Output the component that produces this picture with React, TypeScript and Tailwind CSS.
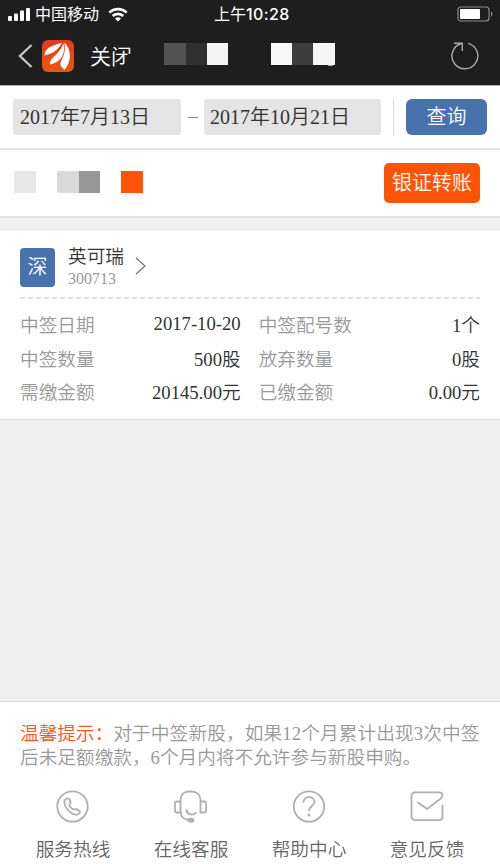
import type { ReactNode } from 'react'

const STATS = [
  ['中签日期', '2017-10-20', '中签配号数', '1个'],
  ['中签数量', '500股', '放弃数量', '0股'],
  ['需缴金额', '20145.00元', '已缴金额', '0.00元'],
]

function Icon({ children }: { children: ReactNode }) {
  return (
    <svg className="h-[34px] w-[34px]" viewBox="0 0 34 34" fill="none" stroke="#b0b0b0" strokeWidth="1.8" strokeLinecap="round" strokeLinejoin="round">
      {children}
    </svg>
  )
}

const LINKS = [
  {
    label: '服务热线',
    icon: (
      <Icon>
        <circle cx="16.500" cy="16.500" r="15.200" />
        <path d="M8.500 11c.3-2.600 4-3.600 5.300-1.200 1.300 2.400 1.200 3.500-.3 4.900-.8.900 2.600 4.900 4.300 4.700 1.500-.2 2.400-.6 4.300.6 2.600 1.600 2.600 3-.1 4.300C16 26.500 7.500 17 8.500 11z" />
      </Icon>
    ),
  },
  {
    label: '在线客服',
    icon: (
      <Icon>
        <path d="M6.500 22.500V10c0-5 3.500-8.500 8-8.500H18c5 0 8.500 3.500 8.500 8.500v12.500" />
        <path d="M6.500 11.500H2.700c-1 0-1.700.7-1.700 1.700v7.600c0 1 .7 1.700 1.700 1.700h3.800M26.500 11.500h3.800c1 0 1.700.7 1.700 1.700v7.600c0 1-.7 1.700-1.700 1.700h-3.800" />
        <path d="M6.500 22.500c.5 4 3.500 7 8.500 7.500M12.500 20c.8 5 6.800 6 9.200 2.800" />
        <ellipse cx="17" cy="30.200" rx="2.500" ry="1.600" fill="#b0b0b0" />
      </Icon>
    ),
  },
  {
    label: '帮助中心',
    icon: (
      <Icon>
        <circle cx="17" cy="16.500" r="15.200" />
        <path d="M11.500 12c0-3 2.500-5 5.500-5s5.500 2 5.500 5c0 4-5.500 4-5.500 8.500" />
        <circle cx="17" cy="25" r="1.400" fill="#b0b0b0" stroke="none" />
      </Icon>
    ),
  },
  {
    label: '意见反馈',
    icon: (
      <Icon>
        <path d="M32.500 15.500V26.500c0 2.300-1.500 3.700-3.700 3.700H5.200c-2.200 0-3.700-1.400-3.700-3.700V6c0-2.300 1.500-3.700 3.700-3.700h23.600c2.200 0 3.700 1.400 3.700 3.200 0 1.500-.8 2.200-1.500 2.700L17.200 19 8 12.500" />
      </Icon>
    ),
  },
]

function StatusBar() {
  return (
    <div className="flex h-7 items-center pl-2 pr-[6px] font-['Inter','Noto_Sans_CJK_SC',sans-serif] text-[16px] font-normal text-white">
      <svg className="h-4 w-[22px] shrink-0" viewBox="0 0 22 16" fill="#fff">
        <rect x="0" y="10" width="4" height="5" rx="1" />
        <rect x="6" y="7.500" width="4" height="7.500" rx="1" />
        <rect x="12" y="4.500" width="4" height="10.500" rx="1" />
        <rect x="18" y="2" width="4" height="13" rx="1" />
      </svg>
      <span className="ml-[5px] w-[66px] whitespace-nowrap leading-none">中国移动</span>
      <svg className="ml-[7px] h-[15px] w-5 shrink-0" viewBox="0 0 20 15" fill="none" stroke="#fff" strokeWidth="2.600">
        <path d="M1.300 5.600a12.500 12.500 0 0 1 17.400 0M4.700 9a7.600 7.600 0 0 1 10.600 0" />
        <path d="M10 14.500 7 11.600a4.300 4.300 0 0 1 6 0z" fill="#fff" stroke="none" />
      </svg>
      <span className="ml-[86px] whitespace-nowrap leading-none">
        上午<span className="font-medium tracking-[0.400px]">10:28</span>
      </span>
      <svg className="ml-auto h-4 w-[37px] shrink-0" viewBox="0 0 37 16" fill="none">
        <rect x="1" y="1" width="31" height="14" rx="3" stroke="#8c8c8c" strokeWidth="1.200" />
        <rect x="3" y="3" width="20" height="10" rx="1" fill="#fff" />
        <path d="M34 5.500c2 1 2 4 0 5z" fill="#8c8c8c" />
      </svg>
    </div>
  )
}

function NavBar() {
  return (
    <div className="flex h-[57px] items-center text-white">
      <svg className="ml-[18px] mb-[2px] h-6 w-[15px]" viewBox="0 0 15 24" fill="none" stroke="#c4c4c4" strokeWidth="2.400">
        <path d="M13.500 1 2 12l11.500 11" />
      </svg>
      <svg className="ml-[9px] mb-[2px] h-8 w-8" viewBox="0 0 32 32">
        <defs>
          <linearGradient id="logo" x1="0" y1="0" x2="0" y2="1">
            <stop offset="0" stopColor="#e23a1c" />
            <stop offset="1" stopColor="#e8590f" />
          </linearGradient>
        </defs>
        <rect width="32" height="32" rx="6" fill="url(#logo)" />
        <path d="M2.500 15.500C2.500 9 8 6 19.800 2.800 16.500 9.500 12 13.500 2.500 15.500z" fill="#fff" />
        <path d="M8 24.500C7 17.500 18 15 21.200 3.200 24.500 14 18 22.500 8 24.500z" fill="#fff" />
        <path d="M22.300 2.500c7.500 7 7.500 19 .2 27.200-3-2.200-4.800-4.500-3.800-7.700 2-5.500 5.500-9 3.600-19.500z" fill="#fff" />
      </svg>
      <div className="relative ml-4 w-[43px] whitespace-nowrap text-[21px] leading-7">
        关闭
        <span className="absolute left-[34px] top-[22px] h-[6px] w-[9px] bg-[#1e1e1e]" />
        <span className="absolute left-[38px] top-[11px] h-4 w-[5px] bg-[#1e1e1e]" />
      </div>
      <div className="mb-1.5 ml-[31px] flex">
        <span className="h-[22px] w-[22px] bg-[#535353]" />
        <span className="h-[22px] w-[21px] bg-[#303030]" />
        <span className="h-[22px] w-[21px] bg-[#f3f3f3]" />
      </div>
      <div className="relative mb-1.5 ml-[43px] flex">
        <span className="h-[22px] w-[21px] bg-[#f7f7f7]" />
        <span className="h-[22px] w-[21px] bg-[#3d3d3d]" />
        <span className="h-[22px] w-[22px] bg-[#f5f5f5]" />
        <span className="absolute left-[57px] top-[22px] h-px w-[5px] bg-[#aaa]" />
      </div>
      <svg className="mb-[2px] ml-[115px] h-[30px] w-[30px]" viewBox="0 0 30 30" fill="none" stroke="#a9a9a9" strokeWidth="1.400">
        <path d="M18 2.400A12.900 12.900 0 1 1 11.400 2.500M4 2.300h8.300v7.700" />
      </svg>
    </div>
  )
}

export default function App() {
  return (
    <div className="flex h-[864px] w-[500px] flex-col overflow-hidden bg-[#efefef] font-['Liberation_Serif','Noto_Sans_CJK_SC',serif] font-[350]">
      <header className="h-[85px] shrink-0 bg-[#1e1e1e]">
        <StatusBar />
        <NavBar />
      </header>

      <section className="flex h-[65px] shrink-0 items-center border-b-2 border-t border-b-[#e4e4e4] border-t-[#aaa] bg-white pl-[13px] text-[20px] text-[#333]">
        <div className="flex h-9 w-[168px] items-center rounded-[3px] bg-[#e4e4e4] pl-[7px] leading-9">2017年7月13日</div>
        <span className="ml-[7px] h-px w-[10px] bg-[#888]" />
        <div className="ml-[6px] flex h-9 w-[177px] items-center rounded-[3px] bg-[#e4e4e4] pl-[6px] leading-9">2017年10月21日</div>
        <span className="ml-3 h-[37px] w-px bg-[#ddd]" />
        <button className="ml-[12px] h-9 w-[81px] rounded-[6px] bg-[#4872ae] text-white">查询</button>
      </section>

      <section className="flex h-[68px] shrink-0 items-center border-b-2 border-[#e4e4e4] bg-white pl-[14px] pr-5">
        <span className="mb-[3px] h-[22px] w-[22px] bg-[#e8e8e8]" />
        <span className="mb-[3px] ml-[21px] h-[22px] w-[22px] bg-[#d9d9d9]" />
        <span className="mb-[3px] h-[22px] w-[21px] bg-[#969696]" />
        <span className="mb-[3px] ml-[21px] h-[22px] w-[22px] bg-[#fd5409]" />
        <button className="ml-auto h-10 w-24 rounded-[5px] bg-[#fd5409] text-[20px] text-white">银证转账</button>
      </section>

      <section className="mt-[13px] h-[189px] shrink-0 border-b border-[#d8d8d8] bg-white px-5">
        <div className="flex h-[66px] items-center pt-[6px]">
          <div className="flex h-[39px] w-[35px] items-center justify-center rounded-[4px] bg-[#4872ae] text-[20px] text-white">深</div>
          <div className="ml-[13px] w-14">
            <div className="whitespace-nowrap text-[18.670px] leading-[24px] text-[#333]">英可瑞</div>
            <div className="text-[16px] leading-[20px] text-[#999]">300713</div>
          </div>
          <svg className="mb-[2px] ml-[11px] h-[18px] w-[11px]" viewBox="0 0 11 18" fill="none" stroke="#777" strokeWidth="1.300">
            <path d="m1 1 9 8-9 8" />
          </svg>
        </div>
        <svg className="block h-[2px] w-[460px]" viewBox="0 0 460 2">
          <path d="M0 1h460" stroke="#d6d6d6" strokeWidth="1.500" strokeDasharray="5 3" />
        </svg>
        <div className="mt-[10px]">
          {STATS.map(([a, b, c, d]) => (
            <div key={a} className="flex h-[33.500px] items-center whitespace-nowrap text-[18.670px] leading-[33.500px] text-[#333]">
              <span className="text-[#999]">{a}</span>
              <span className={b.includes('-') ? 'w-[146px] pb-1 text-right' : 'w-[146px] text-right'}>{b}</span>
              <span className="ml-[18px] text-[#999]">{c}</span>
              <span className="ml-auto">{d}</span>
            </div>
          ))}
        </div>
      </section>

      <footer className="mt-auto h-[163px] shrink-0 border-t border-[#d4d4d4] bg-white">
        <p className="whitespace-nowrap pl-5 pt-5 text-[18.670px] leading-6 text-[#999]">
          <span className="text-[#f0581c]">温馨提示：</span>
          <span className="tracking-[0.120px]">对于中签新股，如果12个月累计出现3次中签</span>
          <br />
          后未足额缴款，6个月内将不允许参与新股申购。
        </p>
        <nav className="mt-[20px] grid grid-cols-[118px_118px_118px_118px] pl-[14px]">
          {LINKS.map(({ label, icon }) => (
            <a key={label} className="flex flex-col items-center">
              {icon}
              <span className="mt-3 whitespace-nowrap text-[18.670px] leading-[28px] text-[#666]">{label}</span>
            </a>
          ))}
        </nav>
      </footer>
    </div>
  )
}
